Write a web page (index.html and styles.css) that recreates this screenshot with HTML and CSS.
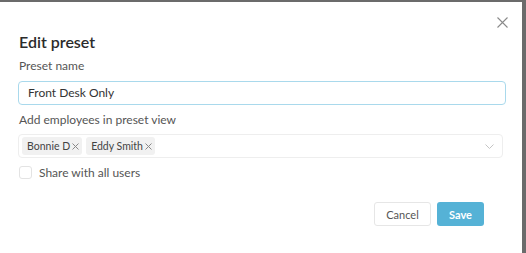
FILE: index.html
```html
<!DOCTYPE html>
<html>
<head>
<meta charset="utf-8">
<link rel="stylesheet" href="styles.css">
</head>
<body>
<div class="modal">
  <button class="close" aria-label="Close">
    <svg width="11" height="11" viewBox="0 0 11 11"><path d="M0.5 0.5L10.5 10.5M10.5 0.5L0.5 10.5" stroke="#8a8a8a" stroke-width="1.1" fill="none"/></svg>
  </button>
  <h1 class="title">Edit preset</h1>
  <label class="label">Preset name</label>
  <div class="input">Front Desk Only</div>
  <label class="label label-2">Add employees in preset view</label>
  <div class="select">
    <div class="tags">
      <span class="tag">Bonnie D <svg class="x" width="7" height="7" viewBox="0 0 7 7"><path d="M0.5 0.5L6.5 6.5M6.5 0.5L0.5 6.5" stroke="#888" stroke-width="1" fill="none"/></svg></span>
      <span class="tag">Eddy Smith <svg class="x" width="7" height="7" viewBox="0 0 7 7"><path d="M0.5 0.5L6.5 6.5M6.5 0.5L0.5 6.5" stroke="#888" stroke-width="1" fill="none"/></svg></span>
    </div>
    <svg class="chev" width="9" height="5" viewBox="0 0 9 5"><path d="M0.5 0.5L4.5 4.5L8.5 0.5" stroke="#c4c4c4" stroke-width="1" fill="none"/></svg>
  </div>
  <div class="check-row">
    <span class="checkbox"></span>
    <span class="check-label">Share with all users</span>
  </div>
  <div class="actions">
    <button class="btn btn-cancel">Cancel</button>
    <button class="btn btn-save">Save</button>
  </div>
</div>
</body>
</html>
```
FILE: styles.css
```css
html, body {
  margin: 0;
  padding: 0;
}
body {
  background: #6b6b6b;
  width: 526px;
  height: 253px;
  overflow: hidden;
  font-family: Lato, "Noto Sans", sans-serif;
}
.modal {
  position: relative;
  margin-top: 2px;
  width: 522px;
  height: 251px;
  background: #fff;
  box-sizing: border-box;
  padding: 28px 20px 0 18px;
  display: flex;
  flex-direction: column;
}
.close {
  position: absolute;
  top: 15px;
  right: 14px;
  border: 0;
  background: none;
  padding: 0;
  width: 11px;
  height: 11px;
  display: flex;
}
.title {
  margin: 0 0 0 1px;
  font-size: 16px;
  font-weight: 600;
  color: #2b2b2b;
  line-height: 24px;
}
.label {
  display: block;
  margin: 4px 0 0 1px;
  font-size: 12px;
  color: #555;
  line-height: 15px;
}
.label-2 {
  margin-top: 7px;
}
.input {
  margin-top: 8px;
  height: 24px;
  box-sizing: border-box;
  border: 1px solid #a9d9ec;
  border-radius: 4px;
  padding: 0 9px;
  font-size: 12px;
  line-height: 22px;
  color: #333;
  width: 488px;
}
.select {
  margin-top: 7px;
  width: 485px;
  height: 24px;
  box-sizing: border-box;
  border: 1px solid #eeeeee;
  border-radius: 4px;
  padding: 0 8px 0 3px;
  display: flex;
  align-items: center;
  justify-content: space-between;
}
.tags {
  display: flex;
  gap: 4px;
}
.tag {
  background: #f1f1f1;
  border-radius: 3px;
  height: 18px;
  padding: 0 3px 0 5px;
  display: flex;
  align-items: center;
  gap: 2px;
  font-size: 10.5px;
  color: #444;
}
.check-row {
  margin-top: 7px;
  margin-left: 1px;
  display: flex;
  align-items: center;
  gap: 7px;
  height: 15px;
}
.checkbox {
  width: 11px;
  height: 11px;
  border: 1px solid #e3e3e3;
  border-radius: 3px;
}
.check-label {
  font-size: 12px;
  color: #555;
}
.actions {
  margin-top: 22px;
  display: flex;
  justify-content: flex-end;
  gap: 6px;
  padding-right: 18px;
}
.btn {
  height: 24px;
  border-radius: 3px;
  font-family: Lato, "Noto Sans", sans-serif;
  font-size: 11px;
  padding: 0;
}
.btn-cancel {
  width: 57px;
  background: #fff;
  border: 1px solid #e6e6e6;
  color: #555;
}
.btn-save {
  width: 47px;
  background: #55b2d6;
  border: 0;
  color: #fff;
  font-weight: 700;
}
```
